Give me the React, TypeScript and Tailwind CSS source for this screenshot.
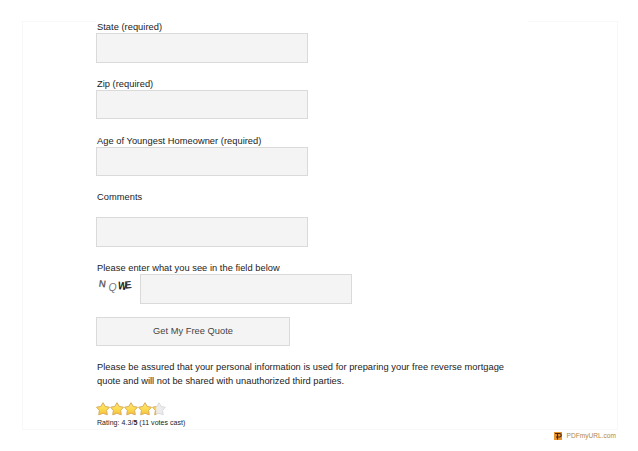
import React from 'react';

const STAR = 'M6.5 0.7 L8.5 4.1 L12.4 4.9 L9.8 7.9 L10.4 11.9 L6.5 10.4 L2.6 11.9 L3.2 7.9 L0.6 4.9 L4.5 4.1 Z';

const fields = [
  { label: 'State (required)', name: 'state', height: 'h-[30px]' },
  { label: 'Zip (required)', name: 'zip', height: 'h-[29px]' },
  { label: 'Age of Youngest Homeowner (required)', name: 'age', height: 'h-[29px]' },
];

const inputStyle = 'block w-[212px] border border-[#dadada] bg-[#f4f4f4] px-2 outline-none';

function Star({ fill, id }: { fill: number; id: string }) {
  return (
    <svg width="14" height="14" viewBox="0 0 13 13">
      <defs>
        <linearGradient id={`gold-${id}`} x1="0" y1="0" x2="0" y2="1">
          <stop offset="0" stopColor="#fbe27a" />
          <stop offset="0.5" stopColor="#fbdc50" />
          <stop offset="1" stopColor="#f5bf3a" />
        </linearGradient>
        <clipPath id={`part-${id}`}>
          <rect x="0" y="0" width={13 * fill} height="13" />
        </clipPath>
      </defs>
      <path d={STAR} fill="#ececee" stroke="#d6d6d8" strokeWidth="0.8" strokeLinejoin="round" />
      <path
        d={STAR}
        fill={`url(#gold-${id})`}
        stroke="#dfb055"
        strokeWidth="0.9"
        strokeLinejoin="round"
        clipPath={`url(#part-${id})`}
      />
    </svg>
  );
}

function Captcha() {
  return (
    <svg width="44" height="20" viewBox="0 0 44 20" fontFamily="Liberation Sans, sans-serif">
      <text x="3" y="13" fontSize="9.5" fill="#555" stroke="#555" strokeWidth="0.3" transform="rotate(8 6 10)">N</text>
      <text x="12.5" y="16.5" fontSize="10.5" fill="#777" fontStyle="italic">Q</text>
      <text x="22" y="15.5" fontSize="11" fill="#222" fontWeight="bold" textLength="9" lengthAdjust="spacingAndGlyphs" transform="rotate(8 25 11)">W</text>
      <text x="28.5" y="14.5" fontSize="10.5" fill="#333" fontWeight="bold" transform="rotate(-6 32 10)">E</text>
    </svg>
  );
}

export default function App() {
  return (
    <div className="h-[451px] w-[638px] overflow-hidden bg-white pt-[21px] font-['Liberation_Sans',Arial,sans-serif] text-[9.3px] text-[#222]">
      <main className="ml-[22px] h-[409px] w-[596px] border border-[#f8f8f8]">
        <form className="-mt-px ml-[73px] w-[432px] bg-white tracking-[0.03px]" onSubmit={(e) => e.preventDefault()}>
          {fields.map((field) => (
            <div key={field.name} className="h-[57px]">
              <label htmlFor={field.name} className="block h-3 pl-px leading-3">
                {field.label}
              </label>
              <input id={field.name} className={`${inputStyle} ${field.height}`} />
            </div>
          ))}

          <label htmlFor="comments" className="-mt-px block h-[26px] pl-px leading-3">
            Comments
          </label>
          <input id="comments" className={`${inputStyle} h-[30px]`} />

          <label htmlFor="captcha" className="mt-[15px] block h-3 pl-px leading-3">
            Please enter what you see in the field below
          </label>
          <div className="flex">
            <Captcha />
            <input id="captcha" className={`${inputStyle} h-[30px]`} />
          </div>

          <button type="submit" className="mt-[13px] block h-[29px] w-[194px] border border-[#dadada] bg-[#f4f4f4] tracking-[0.03px] text-[#444]">
            Get My Free Quote
          </button>

          <p className="mt-[14px] pl-px leading-[14px] tracking-[0.025px] whitespace-nowrap">
            Please be assured that your personal information is used for preparing your free reverse mortgage
            <br />
            quote and will not be shared with unauthorized third parties.
          </p>

          <div className="mt-[14px] flex">
            {[1, 1, 1, 1, 0.3].map((fill, i) => (
              <Star key={i} id={String(i)} fill={fill} />
            ))}
          </div>
          <div className="mt-[3px] pl-px text-[7px] leading-[8px] tracking-[0.05px]">
            Rating: 4.3/<b>5</b> (11 votes cast)
          </div>
        </form>
      </main>
      <footer className="mt-px flex items-center justify-end pr-[22px] text-[6.6px] leading-[10px] text-[#b08a4a]">
        <svg width="8" height="8" viewBox="0 0 8 8" className="mr-[5px]">
          <rect width="8" height="8" fill="#e8962e" />
          <path d="M1 1.5h4.5a1.2 1.2 0 0 1 0 3.5H2M3.5 1v6.5" fill="none" stroke="#4a2408" strokeWidth="1.1" />
        </svg>
        PDFmyURL.com
      </footer>
    </div>
  );
}
